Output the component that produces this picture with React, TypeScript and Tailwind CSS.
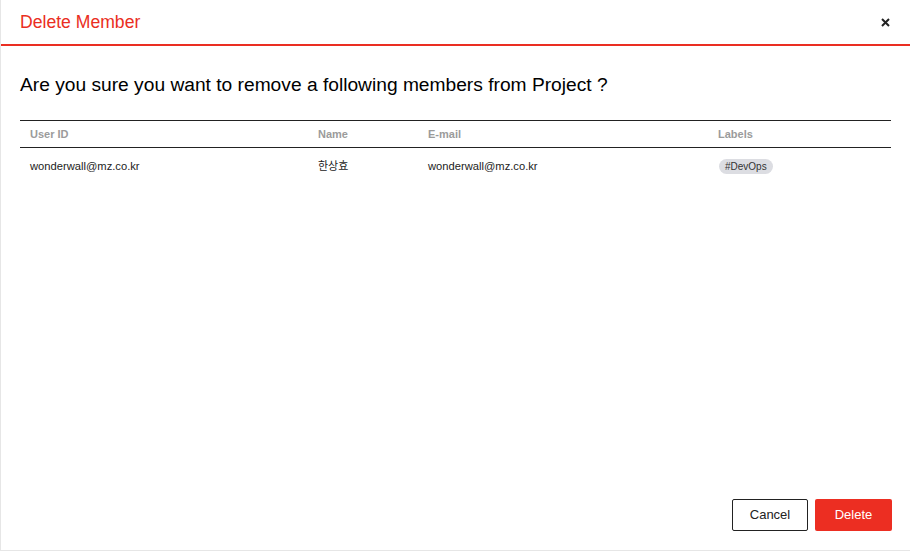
import React from 'react';

interface Member {
  userId: string;
  name: string;
  email: string;
  labels: string[];
}

const members: Member[] = [
  { userId: 'wonderwall@mz.co.kr', name: '한상효', email: 'wonderwall@mz.co.kr', labels: ['#DevOps'] },
];

const App: React.FC = () => {
  return (
    <div
      className="w-[910px] h-[551px] bg-white border-l border-b border-[#e6e6e6] flex flex-col overflow-hidden"
      style={{ fontFamily: '"Liberation Sans", Arial, "Noto Sans CJK KR", sans-serif' }}
    >
      {/* Header */}
      <div className="h-[46px] shrink-0 flex items-center justify-between pl-[19px] pr-[20px] border-b-2 border-[#ea2e22]">
        <h1 className="text-[17.6px] text-[#ea2e22] leading-none pt-[2px]">Delete Member</h1>
        <button className="text-[#222] w-[10px] h-[10px] flex items-center justify-center">
          <svg width="9" height="9" viewBox="0 0 9 9" fill="none">
            <path d="M1 1L8 8M8 1L1 8" stroke="#222" strokeWidth="2" />
          </svg>
        </button>
      </div>

      {/* Body */}
      <div className="flex-1 pl-[19px] pr-5">
        <h2 className="mt-[28px] text-[19.2px] leading-[22px] text-black">
          Are you sure you want to remove a following members from Project ?
        </h2>

        <table className="mt-[24px] w-[871px] table-fixed border-collapse text-[11px]">
          <colgroup>
            <col className="w-[288px]" />
            <col className="w-[110px]" />
            <col className="w-[290px]" />
            <col className="w-[183px]" />
          </colgroup>
          <thead>
            <tr className="border-t border-b border-[#222] h-[27px]">
              <th className="text-left font-bold text-[#9b9b9b] px-[10px]">User ID</th>
              <th className="text-left font-bold text-[#9b9b9b] px-[10px]">Name</th>
              <th className="text-left font-bold text-[#9b9b9b] px-[10px]">E-mail</th>
              <th className="text-left font-bold text-[#9b9b9b] px-[10px]">Labels</th>
            </tr>
          </thead>
          <tbody>
            {members.map((m) => (
              <tr key={m.userId} className="h-[37px]">
                <td className="px-[10px] text-[#222] text-[11.2px]">{m.userId}</td>
                <td className="px-[10px] text-[#222]">{m.name}</td>
                <td className="px-[10px] text-[#222] text-[11.2px]">{m.email}</td>
                <td className="px-[10px] pl-[11px]">
                  {m.labels.map((l) => (
                    <span
                      key={l}
                      className="inline-flex items-center h-[15px] px-[6px] rounded-full bg-[#dcdde2] text-[10px] text-[#333]"
                    >
                      {l}
                    </span>
                  ))}
                </td>
              </tr>
            ))}
          </tbody>
        </table>
      </div>

      {/* Footer */}
      <div className="shrink-0 flex justify-end gap-[7px] pr-[18px] pb-[19px]">
        <button className="w-[76px] h-[32px] border border-[#222] rounded-[2px] text-[13px] text-[#222] bg-white">
          Cancel
        </button>
        <button className="w-[77px] h-[32px] rounded-[2px] text-[13px] text-white bg-[#ec2e22]">
          Delete
        </button>
      </div>
    </div>
  );
};

export default App;
